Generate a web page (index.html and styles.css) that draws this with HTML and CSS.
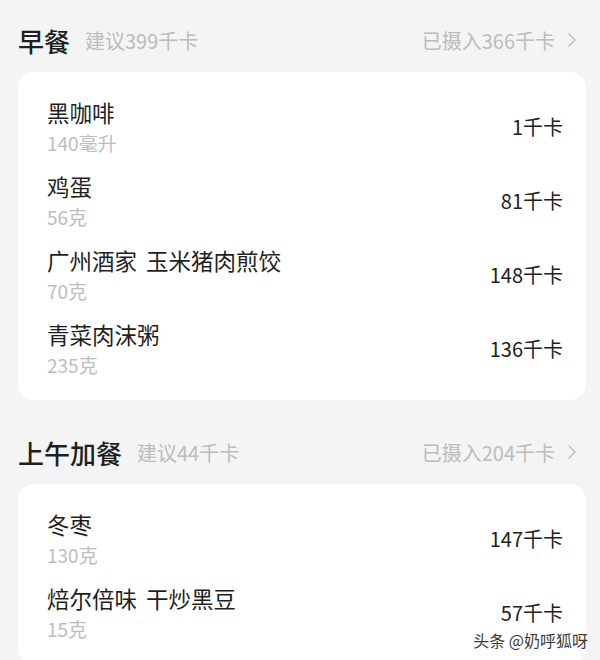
FILE: index.html
```html
<!DOCTYPE html>
<html lang="zh-CN">
<head>
    <meta charset="UTF-8">
    <meta name="viewport" content="width=device-width, initial-scale=1.0">
    <title>饮食记录</title>
    <link rel="stylesheet" href="styles.css">
</head>
<body>
    <div class="meal">
        <div class="meal-head">
            <span class="meal-title">早餐</span>
            <span class="meal-advice">建议399千卡</span>
            <span class="meal-total">已摄入366千卡
                <svg class="chevron" width="8" height="14" viewBox="0 0 8 14"><polyline points="1,1 7,7 1,13" fill="none" stroke="#c2c2c2" stroke-width="1.6" stroke-linecap="round" stroke-linejoin="round"/></svg>
            </span>
        </div>
        <div class="card">
            <div class="food">
                <div class="food-info">
                    <div class="food-name">黑咖啡</div>
                    <div class="food-amount">140毫升</div>
                </div>
                <div class="food-kcal">1千卡</div>
            </div>
            <div class="food">
                <div class="food-info">
                    <div class="food-name">鸡蛋</div>
                    <div class="food-amount">56克</div>
                </div>
                <div class="food-kcal">81千卡</div>
            </div>
            <div class="food">
                <div class="food-info">
                    <div class="food-name">广州酒家&nbsp;玉米猪肉煎饺</div>
                    <div class="food-amount">70克</div>
                </div>
                <div class="food-kcal">148千卡</div>
            </div>
            <div class="food">
                <div class="food-info">
                    <div class="food-name">青菜肉沫粥</div>
                    <div class="food-amount">235克</div>
                </div>
                <div class="food-kcal">136千卡</div>
            </div>
        </div>
    </div>

    <div class="meal">
        <div class="meal-head">
            <span class="meal-title">上午加餐</span>
            <span class="meal-advice">建议44千卡</span>
            <span class="meal-total">已摄入204千卡
                <svg class="chevron" width="8" height="14" viewBox="0 0 8 14"><polyline points="1,1 7,7 1,13" fill="none" stroke="#c2c2c2" stroke-width="1.6" stroke-linecap="round" stroke-linejoin="round"/></svg>
            </span>
        </div>
        <div class="card">
            <div class="food">
                <div class="food-info">
                    <div class="food-name">冬枣</div>
                    <div class="food-amount">130克</div>
                </div>
                <div class="food-kcal">147千卡</div>
            </div>
            <div class="food">
                <div class="food-info">
                    <div class="food-name">焙尔倍味&nbsp;干炒黑豆</div>
                    <div class="food-amount">15克</div>
                </div>
                <div class="food-kcal">57千卡</div>
            </div>
        </div>
    </div>

    <div class="watermark">头条 @奶呼狐呀</div>
</body>
</html>
```

FILE: styles.css
```css
html, body {
    height: 660px;
    overflow: hidden;
}
body {
    margin: 0;
    padding-top: 20px;
    box-sizing: border-box;
    position: relative;
    background-color: #f4f4f4;
    font-family: "Noto Sans CJK SC", "Noto Sans", sans-serif;
    color: #222;
}
.meal {
    margin-bottom: 32px;
}
.meal-head {
    display: flex;
    align-items: center;
    height: 40px;
    margin-bottom: 12px;
    padding: 0 24px 0 18px;
}
.meal-title {
    font-size: 26px;
    font-weight: 500;
    color: #1f1f1f;
}
.meal-advice {
    margin-left: 15px;
    font-size: 20px;
    color: #bcbcbc;
}
.meal-total {
    margin-left: auto;
    display: flex;
    align-items: center;
    gap: 13px;
    font-size: 20px;
    color: #bcbcbc;
}
.chevron {
    display: block;
}
.card {
    margin: 0 14px 0 18px;
    padding: 18px 0 14px;
    background-color: #fff;
    border-radius: 16px;
}
.food {
    display: flex;
    align-items: center;
    justify-content: space-between;
    padding: 7px 23px 7px 29px;
}
.food-name {
    font-size: 22.5px;
    line-height: 31px;
    color: #1f1f1f;
    word-spacing: 4px;
}
.food-amount {
    font-size: 19px;
    line-height: 29px;
    color: #bdbdbd;
}
.food-kcal {
    font-size: 20px;
    line-height: 22px;
    color: #222;
}
.watermark {
    position: absolute;
    right: 12px;
    bottom: 10px;
    font-size: 16px;
    line-height: 20px;
    color: #3a3a3a;
    text-shadow: 0 0 2px #fff, 0 0 2px #fff;
}
```
